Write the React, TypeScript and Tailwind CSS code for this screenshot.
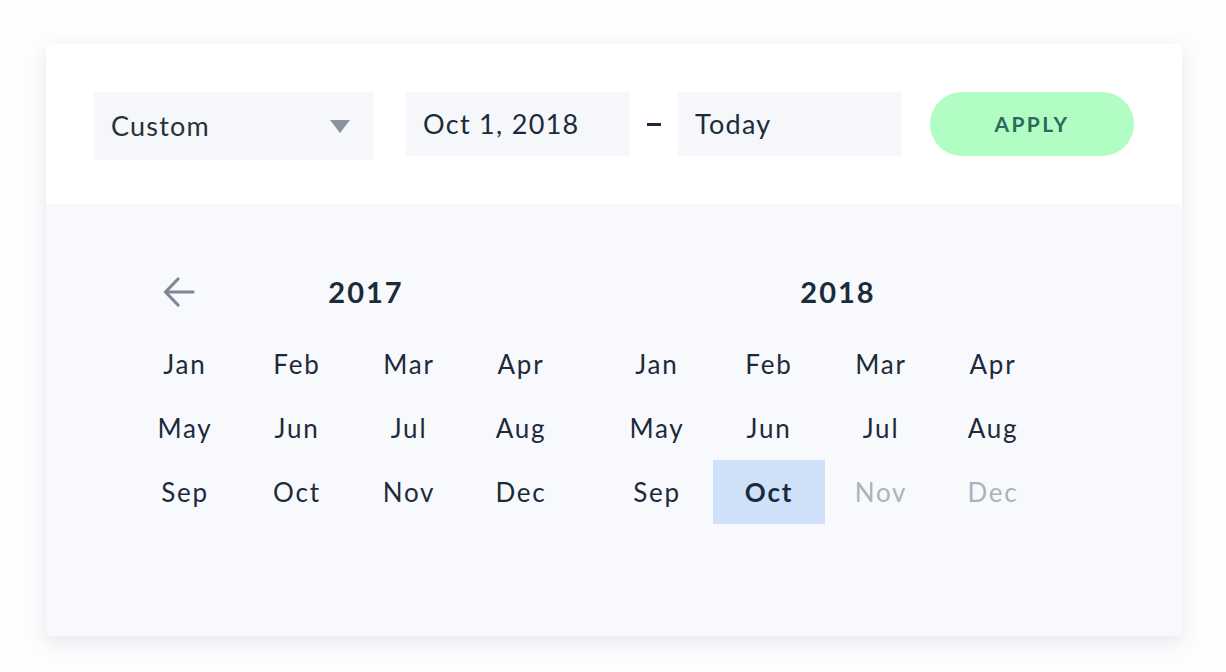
import React from "react";

const Months = ["Jan", "Feb", "Mar", "Apr", "May", "Jun", "Jul", "Aug", "Sep", "Oct", "Nov", "Dec"];

type YearPanelProps = {
  year: number;
  showBack?: boolean;
  selected?: number;
  disabledFrom?: number;
};

const YearPanel = ({ year, showBack, selected, disabledFrom }: YearPanelProps) => {
  return (
    <div className="w-[448px] flex flex-col">
      <div className="relative h-12 flex items-center">
        {showBack && (
          <svg
            className="absolute left-[34px] top-[8px]"
            width="32"
            height="32"
            viewBox="0 0 32 32"
            fill="none"
            stroke="#7b8794"
            strokeWidth="3.2"
            strokeLinecap="round"
            strokeLinejoin="round"
          >
            <path d="M30 16H3" />
            <path d="M15 3L2.5 16 15 29" />
          </svg>
        )}
        <div className="pl-[26px] w-full text-center text-[29px] font-bold tracking-[2px] text-[#1c2b3a]">
          {year}
        </div>
      </div>
      <div className="mt-4 grid grid-cols-4">
        {Months.map((m, i) => {
          const isSel = selected === i;
          const isOff = disabledFrom !== undefined && i >= disabledFrom;
          return (
            <div
              key={m}
              className={`h-16 flex items-center justify-center text-[26px] tracking-[1.8px] ${
                isSel ? "bg-[#cfe1f8] font-bold text-[#1c2b3a]" : isOff ? "text-[#abb3bd]" : "text-[#1c2b3a]"
              }`}
            >
              {m}
            </div>
          );
        })}
      </div>
    </div>
  );
};

const App = () => {
  return (
    <div
      className="w-[1226px] h-[672px] bg-[#fdfdfe] pt-11 pl-[46px]"
      style={{ fontFamily: "Lato, 'Noto Sans', sans-serif" }}
    >
      <div className="w-[1136px] h-[592px] rounded-md overflow-hidden bg-white shadow-[0_6px_18px_rgba(60,70,110,0.12)] flex flex-col">
        {/* top bar */}
        <div className="h-40 bg-white flex items-start pt-12 pl-12">
          <div className="w-[280px] h-[68px] bg-[#f5f7fb] rounded-sm flex items-center justify-between pl-[17px] pr-6">
            <span className="text-[27px] tracking-[1.2px] text-[#2a3138]">Custom</span>
            <svg width="20" height="13" viewBox="0 0 20 13">
              <path d="M0 0H20L10 13Z" fill="#8a939e" />
            </svg>
          </div>
          <div className="ml-8 w-[224px] h-16 bg-[#f5f7fb] rounded-sm flex items-center pl-[17px] text-[27px] tracking-[1.3px] text-[#1c2b3a]">
            Oct 1, 2018
          </div>
          <div className="w-12 h-16 flex items-center justify-center">
            <div className="w-[14px] h-[3px] bg-[#1c2b3a]" />
          </div>
          <div className="w-[224px] h-16 bg-[#f5f7fb] rounded-sm flex items-center pl-[17px] text-[27px] tracking-[1.3px] text-[#1c2b3a]">
            Today
          </div>
          <button className="ml-7 w-[204px] h-16 rounded-full bg-[#b1fdc4] text-[21px] font-bold tracking-[2.4px] text-[#2e6a5a]">
            APPLY
          </button>
        </div>
        {/* calendar */}
        <div className="flex-1 bg-[#f8f9fd] pt-16 pl-[83px] flex gap-6">
          <YearPanel year={2017} showBack />
          <YearPanel year={2018} selected={9} disabledFrom={10} />
        </div>
      </div>
    </div>
  );
};

export default App;
